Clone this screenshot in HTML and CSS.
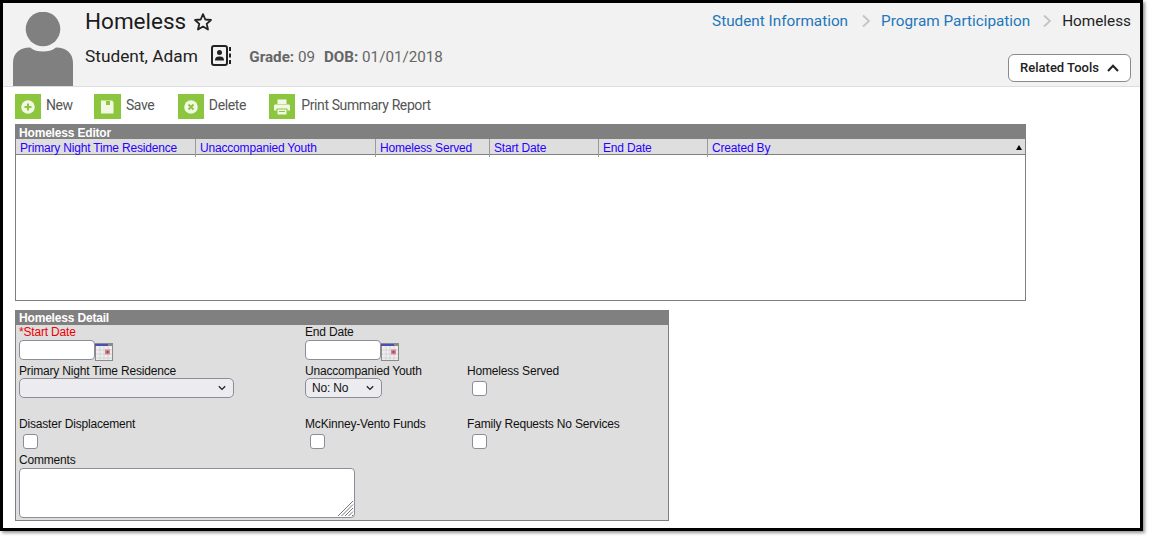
FILE: index.html
```html
<!DOCTYPE html>
<html lang="en">
<head>
<meta charset="utf-8">
<title>Homeless</title>
<link rel="stylesheet" href="styles.css">
</head>
<body>
<div class="frame">
  <header class="page-head">
    <svg class="avatar" width="60" height="74" viewBox="0 0 60 74"><circle cx="30" cy="17" r="17.3" fill="#808080"/><path d="M0 74V51C0 41 7 35.500 17 35.500C21 38.500 25 39.500 30 39.500C35 39.500 39 38.500 43 35.500C53 35.500 60 41 60 51V74Z" fill="#808080"/></svg>
    <div class="head-main">
      <div class="title-row">
        <h1 class="title">Homeless</h1>
        <svg class="star" width="20" height="20" viewBox="0 0 20 20"><path d="M10 2.200L12.300 7.500L18 8L13.700 11.800L15 17.500L10 14.500L5 17.500L6.300 11.800L2 8L7.700 7.500Z" fill="none" stroke="#222" stroke-width="1.800" stroke-linejoin="round"/></svg>
      </div>
      <div class="student-row">
        <span class="student">Student, Adam</span>
        <svg class="card" width="21" height="21" viewBox="0 0 21 21"><rect x="1" y="1" width="15" height="19" rx="2" fill="none" stroke="#222" stroke-width="2"/><circle cx="8.500" cy="7.500" r="2.500" fill="#222"/><path d="M4 15.500C4 12 6 11.500 8.500 11.500C11 11.500 13 12 13 15.500Z" fill="#222"/><path d="M19 2V6M19 8.500V12.500M19 15V19" stroke="#222" stroke-width="2"/></svg>
        <span class="meta"><b>Grade:</b> 09</span>
        <span class="meta"><b>DOB:</b> 01/01/2018</span>
      </div>
    </div>
    <div class="head-side">
      <nav class="crumbs">
        <a class="crumb-link">Student Information</a>
        <svg class="chev chev-first" width="10" height="14" viewBox="0 0 10 14"><path d="M2 1.500L8 7L2 12.500" fill="none" stroke="#c4c4c4" stroke-width="1.800"/></svg>
        <a class="crumb-link">Program Participation</a>
        <svg class="chev" width="10" height="14" viewBox="0 0 10 14"><path d="M2 1.500L8 7L2 12.500" fill="none" stroke="#c4c4c4" stroke-width="1.800"/></svg>
        <span class="crumb-current">Homeless</span>
      </nav>
      <button class="related" type="button"><span class="related-text">Related Tools</span>
        <svg width="12" height="8" viewBox="0 0 12 8"><path d="M1 7L6 1.800L11 7" fill="none" stroke="#222" stroke-width="2"/></svg>
      </button>
    </div>
  </header>

  <div class="toolbar">
    <div class="tool tool-new">
      <span class="tool-icon"><svg width="16" height="16" viewBox="0 0 16 16"><circle cx="8" cy="8" r="6.800" fill="#f3f8e6"/><path d="M8 4.500V11.500M4.500 8H11.500" stroke="#8cc63f" stroke-width="2"/></svg></span><span class="tool-text">New</span>
    </div>
    <div class="tool tool-save">
      <span class="tool-icon"><svg width="16" height="16" viewBox="0 0 16 16"><path d="M2 1.500H13L14.500 3V14.500H2Z" fill="#f3f8e6"/><rect x="7" y="2" width="4" height="4" fill="#8cc63f"/></svg></span><span class="tool-text">Save</span>
    </div>
    <div class="tool tool-delete">
      <span class="tool-icon"><svg width="16" height="16" viewBox="0 0 16 16"><circle cx="8" cy="8" r="6.800" fill="#f3f8e6"/><path d="M5.500 5.500L10.500 10.500M10.500 5.500L5.500 10.500" stroke="#8cc63f" stroke-width="2"/></svg></span><span class="tool-text">Delete</span>
    </div>
    <div class="tool tool-print">
      <span class="tool-icon"><svg width="18" height="18" viewBox="0 0 18 18"><path d="M4.500 1.500H13.500V6H4.500Z" fill="#f3f8e6"/><path d="M2.500 6.500H15.500C16.500 6.500 17 7.200 17 8V12.500H14.500V10.500H3.500V12.500H1V8C1 7.200 1.500 6.500 2.500 6.500Z" fill="#f3f8e6"/><path d="M4.500 11.500H13.500V16.500H4.500Z" fill="#f3f8e6"/><path d="M6 13.500H12" stroke="#8cc63f"/></svg></span><span class="tool-text">Print Summary Report</span>
    </div>
  </div>

  <section class="editor">
    <h2 class="bar">Homeless Editor</h2>
    <div class="grid-head">
      <a class="col">Primary Night Time Residence</a>
      <a class="col">Unaccompanied Youth</a>
      <a class="col">Homeless Served</a>
      <a class="col">Start Date</a>
      <a class="col">End Date</a>
      <a class="col col-last">Created By<span class="sort"></span></a>
    </div>
    <div class="grid-body"></div>
  </section>

  <section class="detail">
    <h2 class="bar">Homeless Detail</h2>
    <div class="form">
      <div class="row row-dates">
        <div class="cell c1">
          <label class="lbl req">*Start Date</label>
          <div class="date"><span class="input"></span>
            <svg class="cal" width="18" height="18" viewBox="0 0 18 18"><rect width="18" height="18" fill="#8a8a8a"/><rect x="1" y="3" width="16" height="14" fill="#eeeeee"/><rect x="0" y="1" width="13" height="2" fill="#4a4fb0"/><path d="M1 7H17M1 11H17M1 15H17M5 3V17M9 3V17M13 3V17" stroke="#cfcfcf" stroke-width=".8"/><rect x="10" y="6.500" width="5" height="5" fill="#c98a96"/><rect x="11.500" y="8" width="2" height="2" fill="#c0304a"/></svg>
          </div>
        </div>
        <div class="cell c2">
          <label class="lbl">End Date</label>
          <div class="date"><span class="input"></span>
            <svg class="cal" width="18" height="18" viewBox="0 0 18 18"><rect width="18" height="18" fill="#8a8a8a"/><rect x="1" y="3" width="16" height="14" fill="#eeeeee"/><rect x="0" y="1" width="13" height="2" fill="#4a4fb0"/><path d="M1 7H17M1 11H17M1 15H17M5 3V17M9 3V17M13 3V17" stroke="#cfcfcf" stroke-width=".8"/><rect x="10" y="6.500" width="5" height="5" fill="#c98a96"/><rect x="11.500" y="8" width="2" height="2" fill="#c0304a"/></svg>
          </div>
        </div>
      </div>
      <div class="row row-select">
        <div class="cell c1">
          <label class="lbl">Primary Night Time Residence</label>
          <div class="select sel-wide"><span></span><svg width="8" height="6" viewBox="0 0 8 6"><path d="M.8 1.200L4 4.400L7.200 1.200" fill="none" stroke="#222" stroke-width="1.300"/></svg></div>
        </div>
        <div class="cell c2">
          <label class="lbl">Unaccompanied Youth</label>
          <div class="select sel-small"><span>No: No</span><svg width="8" height="6" viewBox="0 0 8 6"><path d="M.8 1.200L4 4.400L7.200 1.200" fill="none" stroke="#222" stroke-width="1.300"/></svg></div>
        </div>
        <div class="cell c3">
          <label class="lbl">Homeless Served</label>
          <span class="check"></span>
        </div>
      </div>
      <div class="row row-checks">
        <div class="cell c1">
          <label class="lbl">Disaster Displacement</label>
          <span class="check"></span>
        </div>
        <div class="cell c2">
          <label class="lbl">McKinney-Vento Funds</label>
          <span class="check"></span>
        </div>
        <div class="cell c3">
          <label class="lbl">Family Requests No Services</label>
          <span class="check"></span>
        </div>
      </div>
      <div class="comments">
        <label class="lbl">Comments</label>
        <div class="textarea">
          <svg class="grip" width="17" height="17" viewBox="0 0 17 17"><path d="M16 1L1 16M16 4.500L4.500 16M16 8L8 16M16 11.500L11.500 16M16 15L15 16" stroke="#777" stroke-width="1"/></svg>
        </div>
      </div>
    </div>
  </section>
</div>
</body>
</html>
```
FILE: styles.css
```css
* { box-sizing: border-box; }
html, body { margin: 0; padding: 0; background: #fff; }
body { width: 1149px; height: 538px; overflow: hidden; font-family: "Liberation Sans", Arial, sans-serif; font-size: 12px; letter-spacing: -0.18px; color: #111; }

.frame { width: 1143px; height: 531px; border: 3px solid #000; background: #fff; box-shadow: 2px 2px 3px #999; }

.page-head { display: flex; height: 84px; background: #f2f2f2; border-bottom: 1px solid #ddd; padding-left: 10px; font-family: Roboto, sans-serif; letter-spacing: 0; }
.avatar { margin-top: 9px; flex: none; }
.head-main { margin-left: 12px; flex: none; }
.title-row { display: flex; align-items: center; height: 27px; margin-top: 5px; }
.title { margin: 0; font-size: 22.5px; font-weight: 400; line-height: 27px; color: #1c1c1c; }
.star { margin-left: 7px; }
.student-row { display: flex; align-items: center; height: 24px; margin-top: 9px; }
.student { font-size: 17.3px; color: #222; }
.card { margin: 0 17.5px 2px 13px; }
.meta { font-size: 15.2px; color: #666; margin-right: 9px; padding-top: 2px; }
.meta b { font-weight: 700; }
.head-side { margin-left: auto; margin-right: 9px; display: flex; flex-direction: column; align-items: flex-end; }
.crumbs { display: flex; align-items: center; height: 20px; margin-top: 8px; font-size: 15.3px; }
.crumb-link { color: #2277bb; }
.crumb-current { color: #222; }
.chev { margin: 0 10px 0 12px; }
.chev-first { margin-left: 13px; }
.related { display: flex; align-items: center; justify-content: center; gap: 8px; width: 123px; height: 28px; margin-top: 23px; background: #fff; border: 1px solid #8a8a8a; border-radius: 6px; padding: 0; font-family: Roboto, sans-serif; font-size: 13px; font-weight: 500; color: #222; }
.related-text { margin-top: -2px; }

.toolbar { display: flex; height: 37px; padding: 7px 0 0 12px; font-family: Roboto, sans-serif; font-size: 14px; letter-spacing: -0.4px; color: #555; }
.tool { display: flex; align-items: flex-start; line-height: 23px; }
.tool-icon { display: flex; align-items: center; justify-content: center; width: 26px; height: 25px; background: #8cc63f; margin-right: 5px; }
.tool-save .tool-icon { width: 27px; }
.tool-new { margin-right: 21.2px; }
.tool-save { margin-right: 23.6px; }
.tool-delete { margin-right: 23.4px; }
.tool-print .tool-icon { margin-right: 6px; }

.bar { margin: 0; height: 15px; background: #808080; color: #fff; font-size: 12px; font-weight: 700; line-height: 17px; padding-left: 4px; }
.editor .bar { line-height: 18px; }

.editor { width: 1011px; margin-left: 12px; }
.grid-head { display: grid; grid-template-columns: 180px 180px 114px 109px 109px 1fr; height: 16px; background: #dedede; border: 1px solid #808080; border-top: 0; border-bottom: 1px solid #808080; }
.col { display: block; position: relative; color: #2a00ff; line-height: 18px; padding-left: 4px; border-right: 1px solid #9a9a9a; }
.col-last { border-right: 0; }
.sort { position: absolute; right: 3px; top: 6px; border: 3px solid transparent; border-top: 0; border-bottom: 5px solid #000; }
.grid-body { height: 146px; border: 1px solid #808080; border-top: 0; background: #fff; }

.detail { width: 654px; margin: 9px 0 0 12px; }
.form { height: 196px; background: #dedede; border: 1px solid #808080; border-top: 0; padding-left: 3px; }
.row { display: flex; }
.cell { flex: none; }
.c1 { width: 286px; }
.c2 { width: 162px; }
.c3 { width: 180px; }
.lbl { display: block; height: 14px; line-height: 14px; color: #111; }
.req { color: #ee0000; }
.row-dates { height: 39px; }
.row-select { height: 53px; }
.row-checks { height: 36px; }
.date { display: flex; align-items: flex-end; margin-top: 1px; }
.input { display: block; width: 76px; height: 20px; background: #fff; border: 1px solid #8d8d99; border-radius: 4px; }
.cal { display: block; margin-top: 2px; margin-bottom: -1px; }
.select { display: flex; align-items: center; justify-content: space-between; height: 20px; background: #ebebf0; border: 1px solid #8d8d99; border-radius: 5px; padding: 0 7px 0 6px; color: #111; }
.sel-wide { width: 215px; }
.sel-small { width: 77px; }
.check { display: block; width: 15px; height: 15px; margin: 3px 0 0 4px; background: #fff; border: 1px solid #8d8d99; border-radius: 3px; }
.c2 > .check, .c3 > .check { margin-left: 5px; }
.textarea { position: relative; width: 336px; height: 50px; margin-top: 1px; background: #fff; border: 1px solid #8d8d99; border-radius: 4px; }
.grip { position: absolute; right: 0; bottom: 0; }
```
